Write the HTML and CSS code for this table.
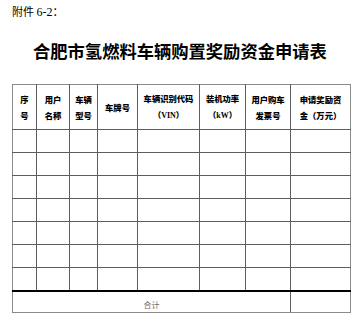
FILE: index.html
```html
<!DOCTYPE html>
<html lang="zh">
<head>
<meta charset="utf-8">
<link rel="stylesheet" href="styles.css">
</head>
<body>
<div class="page">
  <div class="annex"><span class="cn">附件</span> <span class="num">6-2</span><span class="cn">：</span></div>
  <h1 class="title">合肥市氢燃料车辆购置奖励资金申请表</h1>
  <table class="grid">
    <colgroup>
      <col class="c1"><col class="c2"><col class="c3"><col class="c4"><col class="c5"><col class="c6"><col class="c7"><col class="c8">
    </colgroup>
    <thead>
      <tr class="head">
        <th>序<br>号</th>
        <th>用户<br>名称</th>
        <th>车辆<br>型号</th>
        <th>车牌号</th>
        <th>车辆识别代码<br><span class="lat">（VIN）</span></th>
        <th>装机功率<br><span class="lat">（kW）</span></th>
        <th>用户购车<br>发票号</th>
        <th>申请奖励资<br>金（万元）</th>
      </tr>
    </thead>
    <tbody>
      <tr class="row"><td></td><td class="lt"></td><td></td><td></td><td></td><td></td><td></td><td></td></tr>
      <tr class="row"><td></td><td class="lt"></td><td></td><td></td><td></td><td></td><td></td><td></td></tr>
      <tr class="row"><td></td><td class="lt"></td><td></td><td></td><td></td><td></td><td></td><td></td></tr>
      <tr class="row"><td></td><td class="lt"></td><td></td><td></td><td></td><td></td><td></td><td></td></tr>
      <tr class="row"><td></td><td class="lt"></td><td></td><td></td><td></td><td></td><td></td><td></td></tr>
      <tr class="row"><td></td><td class="lt"></td><td></td><td></td><td></td><td></td><td></td><td></td></tr>
      <tr class="row"><td></td><td class="lt"></td><td></td><td></td><td></td><td></td><td></td><td></td></tr>
      <tr class="total"><td colspan="7" class="sum">合计</td><td></td></tr>
    </tbody>
  </table>
</div>
</body>
</html>
```

FILE: styles.css
```css
html, body {
  margin: 0;
  padding: 0;
  background: #ffffff;
}
.page {
  padding: 5px 0 0 12px;
  font-family: "Noto Sans CJK SC", sans-serif;
  color: #000;
}
.annex {
  font-size: 11px;
  line-height: 12px;
  height: 12px;
}
.annex .num {
  font-family: "Liberation Serif", serif;
  font-size: 12px;
}
.title {
  margin: 23px 0 0 21px;
  font-size: 17.3px;
  line-height: 22px;
  height: 22px;
  font-weight: 700;
  white-space: nowrap;
  font-family: "Noto Sans CJK SC", sans-serif;
}
.grid {
  margin-top: 22px;
  border-collapse: collapse;
  table-layout: fixed;
  width: 338px;
}
.c1 { width: 24px; }
.c2 { width: 33px; }
.c3 { width: 28px; }
.c4 { width: 40px; }
.c5 { width: 62px; }
.c6 { width: 46px; }
.c7 { width: 45px; }
.c8 { width: 60px; }
.grid th, .grid td {
  border: 1px solid #5e5e5e;
  padding: 0;
}
.grid th {
  font-size: 8.3px;
  line-height: 16px;
  font-weight: 900;
  text-align: center;
  vertical-align: middle;
  color: #000;
  white-space: nowrap;
  overflow: hidden;
}
.grid thead th { border-top-color: #8a8a8a; }
.grid th:first-child, .grid td:first-child { border-left-color: #8a8a8a; }
.grid th:last-child, .grid td:last-child { border-right-color: #8a8a8a; }
.grid .lat {
  font-family: "Liberation Serif", "Noto Sans CJK SC", serif;
  font-size: 8px;
}
.head { height: 45px; }
.row { height: 23px; }
.grid td.lt { border-left-color: #a0a0a0; }
.total { height: 22px; }
.total td {
  border-top: 2px solid #000;
  border-bottom-color: #8a8a8a;
}
.sum {
  font-size: 8px;
  color: #6b6b6b;
  text-align: center;
  vertical-align: middle;
  padding-top: 6px !important;
}
```
